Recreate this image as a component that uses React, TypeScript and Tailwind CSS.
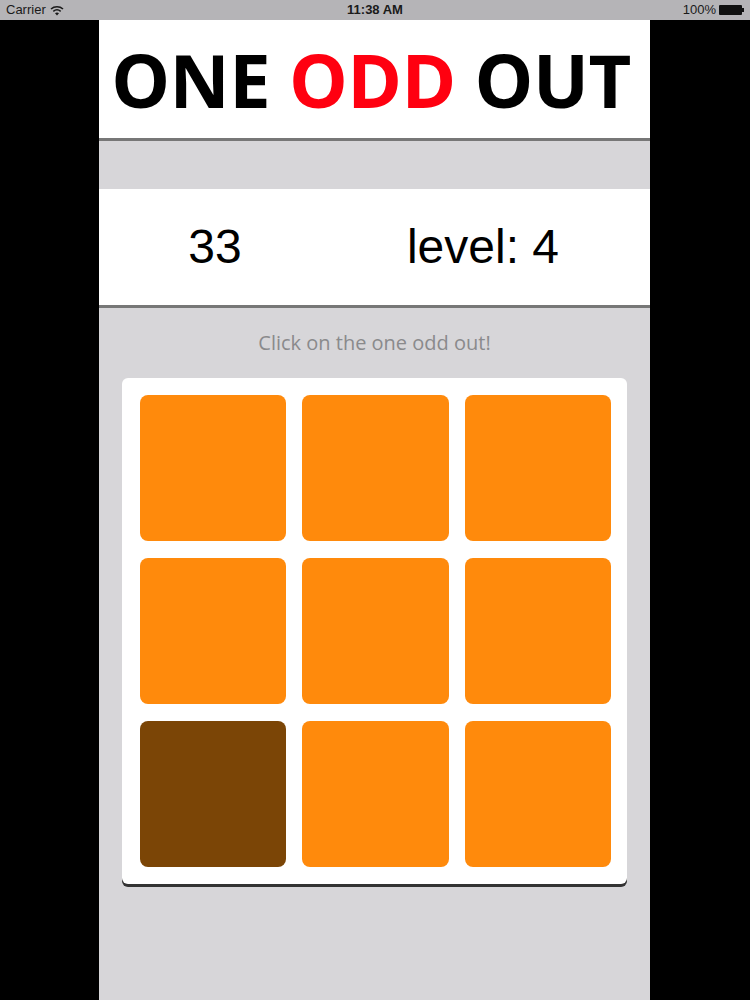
import React from "react";

const tiles = [
  "#ff8a0c", "#ff8a0c", "#ff8a0c",
  "#ff8a0c", "#ff8a0c", "#ff8a0c",
  "#7b4506", "#ff8a0c", "#ff8a0c",
];

export default function App() {
  return (
    <div className="w-[750px] h-[1000px] bg-black flex flex-col overflow-hidden">
      {/* status bar */}
      <div className="h-[20px] bg-[#b5b4b7] flex items-center justify-between px-[6px] text-[13px] text-[#1a1a1a] relative" style={{ fontFamily: '"Liberation Sans", Arial, sans-serif' }}>
        <div className="flex items-center gap-[4px]">
          <span>Carrier</span>
          <svg width="14" height="11" viewBox="0 0 14 11">
            <path d="M1 4 A9 9 0 0 1 13 4" stroke="#1a1a1a" strokeWidth="1.6" fill="none" />
            <path d="M3.3 6.3 A5.8 5.8 0 0 1 10.7 6.3" stroke="#1a1a1a" strokeWidth="1.6" fill="none" />
            <path d="M7 10.5 L5 8.3 A3 3 0 0 1 9 8.3 Z" fill="#1a1a1a" />
          </svg>
        </div>
        <span className="absolute left-1/2 -translate-x-1/2 font-semibold">11:38 AM</span>
        <div className="flex items-center gap-[3px]">
          <span>100%</span>
          <div className="flex items-center">
            <div className="w-[23px] h-[10px] bg-[#111] rounded-[1px]" />
            <div className="w-[2px] h-[4px] bg-[#111]" />
          </div>
        </div>
      </div>
      <div className="w-[551px] ml-[99px] flex-1 bg-[#d7d6d9] flex flex-col">
        <div className="h-[121px] bg-white border-b-[3px] border-[#777] flex items-center justify-center pr-[7px]">
          <h1 className="text-[74px] font-bold tracking-[-0.5px] leading-none mt-[2px] whitespace-nowrap" style={{ fontFamily: '"Open Sans", sans-serif' }}>
            <span className="text-black">ONE </span>
            <span className="text-[#ff0010]">ODD</span>
            <span className="text-black"> OUT</span>
          </h1>
        </div>
        <div className="h-[48px]" />
        <div className="h-[119px] bg-white border-b-[3px] border-[#777] flex items-center text-[48px] text-black" style={{ fontFamily: '"Liberation Sans", Arial, sans-serif' }}>
          <div className="w-[232px] text-center">33</div>
          <div className="w-[304px] text-center">level: 4</div>
        </div>
        <div className="h-[70px] flex items-center justify-center text-[20px] text-[#8a8a8c]" style={{ fontFamily: '"Open Sans", sans-serif' }}>
          Click on the one odd out!
        </div>
        <div className="ml-[23px] w-[505px] bg-white rounded-[6px] shadow-[0_3px_0_#333] pt-[17px] pb-[17px] pl-[18px] pr-[16px] grid grid-cols-3 gap-x-[16px] gap-y-[17px]">
          {tiles.map((c, i) => (
            <div key={i} className="h-[146px] rounded-[8px]" style={{ backgroundColor: c }} />
          ))}
        </div>
      </div>
    </div>
  );
}
